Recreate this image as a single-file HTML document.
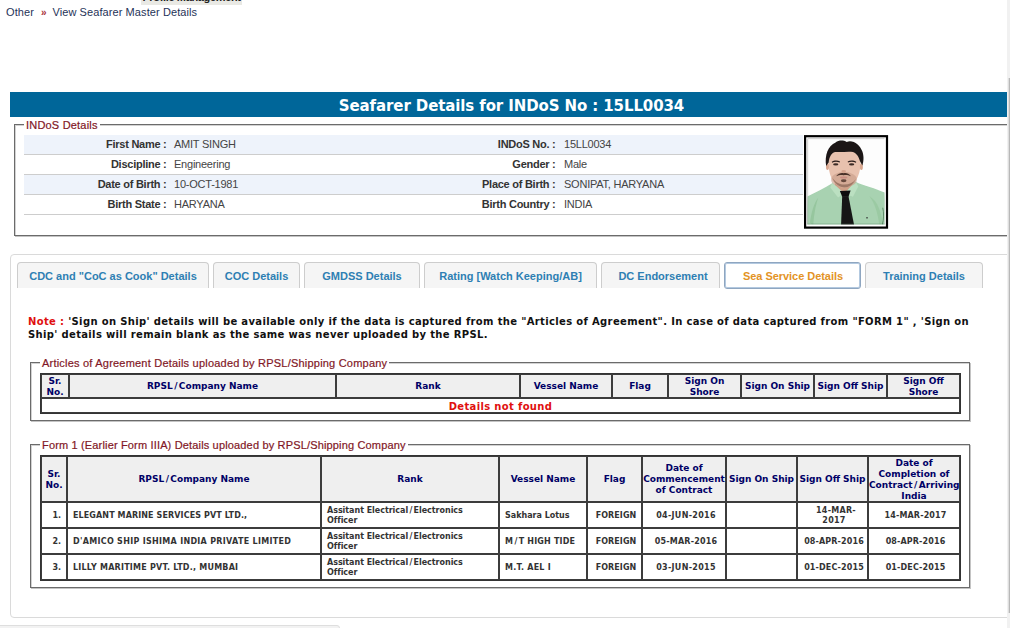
<!DOCTYPE html>
<html lang="en">
<head>
<meta charset="utf-8">
<title>View Seafarer Master Details</title>
<style>
html,body{margin:0;padding:0;}
body{width:1010px;height:628px;overflow:hidden;position:relative;background:#fff;font-family:"Liberation Sans",Arial,sans-serif;font-size:11px;color:#333;}
.abs{position:absolute;}
.v{font-family:"DejaVu Sans",Verdana,sans-serif;font-weight:bold;}
#topclip{left:141px;top:-9px;width:101px;height:13.5px;letter-spacing:-0.35px;background:#e9e9e4;color:#222;font-weight:bold;font-size:11px;line-height:13px;text-align:center;white-space:nowrap;}
#crumb{letter-spacing:0.09px;left:6px;top:5px;font-size:11px;line-height:14px;color:#1f3358;white-space:nowrap;}
#crumb b{color:#a8323a;font-weight:bold;font-size:10px;padding:0 2.5px 0 4px;}
#bar{left:10px;top:92px;width:997px;height:25px;background:#006699;color:#fff;text-align:center;font-size:15px;line-height:28px;white-space:nowrap;letter-spacing:-0.11px;overflow:hidden;box-sizing:border-box;padding-left:6px;}
fieldset{margin:0;padding:0;border:1px solid #6b6b6b;box-shadow:inset 1px 1px 0 #d2d2d2,1px 1px 0 #c4c4c4;position:absolute;box-sizing:border-box;min-width:0;}
legend{letter-spacing:0.15px;padding:1px 2px 0;background:#fff;color:#821726;-webkit-text-stroke:0.2px #821726;font-size:11px;line-height:12px;font-family:"Liberation Sans",Arial,sans-serif;white-space:nowrap;}
#fs0{left:14px;top:118px;width:1000px;height:118px;}
#fs0 legend{margin-left:9px;letter-spacing:0.2px;}
.row{position:absolute;left:24px;width:779px;height:19px;border-bottom:1px solid #cdcdcd;}
.row.alt{background:#eef3fb;}
.row span{position:absolute;top:0;line-height:19px;white-space:nowrap;font-size:11px;}
.row .l{text-align:right;font-weight:bold;color:#333;letter-spacing:-0.26px;}
.row .val{color:#444;letter-spacing:-0.23px;}
.l1{right:636.5px;}
.v1{left:150px;}
.l2{right:247.5px;}
.v2{left:540px;}
#photo{left:800px;top:130px;width:92px;height:104px;}
#tabs{left:10px;top:254px;width:1010px;height:364px;border:1px solid #dadada;border-radius:4px;box-sizing:border-box;}
.tab{position:absolute;top:262px;height:26px;box-sizing:border-box;border:1px solid #cdcdcd;border-bottom:none;border-radius:4px 4px 0 0;background:#f5f5f5;color:#2e7fb3;font-weight:bold;font-size:11px;line-height:26px;text-align:center;white-space:nowrap;}
.tab.act{background:#fff;border:1px solid #8fa6c0;box-shadow:inset 0 0 0 1px #b3c9e0;border-radius:3px;color:#e39325;height:27px;padding-left:1px;letter-spacing:-0.05px;}
#note{left:28px;top:315px;width:960px;font-size:10px;line-height:13px;color:#111;letter-spacing:0.343px;}
#note i{font-style:normal;color:#e01010;}
#fs1{left:30px;top:356px;width:940px;height:65px;}
#fs2{left:30px;top:438px;width:940px;height:150px;}
#fs1 legend{margin-left:9px;letter-spacing:0.21px;}#fs2 legend{margin-left:9px;letter-spacing:0.16px;}
table.g{position:absolute;left:40px;border-collapse:separate;border-spacing:0;border:1px solid #333;table-layout:fixed;width:921px;}
table.g td,table.g th{border:1px solid #3c3c3c;padding:0;overflow:hidden;}
table.g th{background:#efefef;color:#000066;font-family:"DejaVu Sans",Verdana,sans-serif;font-weight:bold;font-size:9px;line-height:11px;text-align:center;}
table.g .sl{padding:0 1.45px;}
table.g th .d{display:block;position:relative;top:1px;}
table.g th .d0{display:block;}
table.g td{font-family:"DejaVu Sans",Verdana,sans-serif;font-weight:bold;font-size:8px;line-height:10px;color:#333;text-align:center;padding-top:1px;}
table.g td.sr{text-align:right;padding-right:5px;}
table.g td .sl{padding:0 1.3px;}
table.g td.lft{text-align:left;padding-left:5px;}
#t1{top:373px;}
#t2{top:455px;}
#nf{color:#e01010;font-size:10px;line-height:11px;height:11px;box-sizing:content-box;padding-top:2px;letter-spacing:0.34px;}
#sb{left:1007px;top:0;width:3px;height:628px;background:#f1f1f1;}
#sbt{left:1008px;top:78px;width:2px;height:535px;background:linear-gradient(to right,#dedede 0,#dedede 1px,#b8b8b8 1px);}
#bot{left:-2px;top:625px;width:342px;height:10px;background:#f2f2f2;border:1px solid #dedede;border-radius:0 3px 0 0;box-sizing:border-box;}
</style>
</head>
<body>
<div class="abs" id="topclip">Profile Management</div>
<div class="abs" id="crumb">Other <b>»</b> View Seafarer Master Details</div>
<div class="abs v" id="bar">Seafarer Details for INDoS No : 15LL0034</div>

<fieldset id="fs0"><legend>INDoS Details</legend></fieldset>
<div class="row alt" style="top:135px"><span class="l l1">First Name :</span><span class="val v1">AMIT SINGH</span><span class="l l2">INDoS No. :</span><span class="val v2">15LL0034</span></div>
<div class="row" style="top:155px"><span class="l l1">Discipline :</span><span class="val v1">Engineering</span><span class="l l2">Gender :</span><span class="val v2">Male</span></div>
<div class="row alt" style="top:175px"><span class="l l1">Date of Birth :</span><span class="val v1">10-OCT-1981</span><span class="l l2">Place of Birth :</span><span class="val v2">SONIPAT, HARYANA</span></div>
<div class="row" style="top:195px"><span class="l l1">Birth State :</span><span class="val v1">HARYANA</span><span class="l l2">Birth Country :</span><span class="val v2">INDIA</span></div>

<svg class="abs" id="photo" viewBox="0 0 92 104">
<defs><filter id="bl" x="-5%" y="-5%" width="110%" height="110%"><feGaussianBlur stdDeviation="3.2"/></filter>
<clipPath id="pc"><rect x="44" y="50" width="468" height="521"/></clipPath></defs>
<rect x="5.1" y="6.2" width="81.9" height="91.4" fill="#fff" stroke="#000" stroke-width="2.2"/>
<g transform="scale(0.16548)" clip-path="url(#pc)">
<rect x="44" y="50" width="468" height="521" fill="#fdfdfd"/>
<g filter="url(#bl)">
<path d="M212,300 L332,300 L340,380 L205,380 Z" fill="#cfa088"/>
<path d="M40,590 L44,402 C90,378 150,352 195,322 L268,388 L336,312 C380,336 460,352 512,378 L520,590 Z" fill="#a8d2b1"/>
<path d="M60,560 C70,500 80,450 110,410 C90,470 85,520 80,575 Z" fill="#8fc096" opacity=".7"/>
<path d="M420,400 C450,440 470,500 480,575 L500,575 C495,500 470,430 420,400 Z" fill="#93c49a" opacity=".6"/>
<path d="M195,318 L268,384 L230,408 L183,348 Z" fill="#bbe0c1"/>
<path d="M336,310 L268,384 L320,404 L352,342 Z" fill="#bbe0c1"/>
<path d="M241,368 L306,366 L293,404 L255,404 Z" fill="#101010"/>
<path d="M255,400 L293,400 L328,580 L248,580 Z" fill="#141414"/>
<path d="M170,180 C168,150 190,126 220,126 C260,130 300,124 325,128 C352,134 368,160 366,200 C366,240 355,280 335,310 C315,336 290,347 268,347 C240,347 215,332 198,306 C180,275 170,230 170,180 Z" fill="#e8c1ae"/>
<ellipse cx="166" cy="222" rx="9" ry="20" fill="#d9a78f"/>
<ellipse cx="371" cy="222" rx="9" ry="20" fill="#d9a78f"/>
<ellipse cx="266" cy="300" rx="78" ry="46" fill="#c29884" opacity=".55"/>
<path d="M196,290 C212,328 240,347 268,347 C294,347 320,332 338,296 C322,318 296,330 268,330 C242,330 216,318 196,290 Z" fill="#7a5646" opacity=".6"/>
<path d="M218,280 C233,260 254,257 264,262 C274,257 294,260 308,280 C292,271 276,271 264,273 C250,271 236,271 218,280 Z" fill="#4a3129"/>
<ellipse cx="264" cy="287" rx="22" ry="6.5" fill="#c98d82"/>
<ellipse cx="264" cy="307" rx="17" ry="9" fill="#5a3d33" opacity=".9"/>
<ellipse cx="264" cy="250" rx="14" ry="9" fill="#d3a28d"/>
<ellipse cx="216" cy="208" rx="16" ry="7" fill="#3b2a26"/>
<ellipse cx="312" cy="208" rx="16" ry="7" fill="#3b2a26"/>
<path d="M192,192 C205,182 228,182 242,190 L240,196 C226,190 206,190 194,198 Z" fill="#2a1d1a"/>
<path d="M288,190 C302,182 326,182 340,192 L338,198 C324,190 304,190 290,196 Z" fill="#2a1d1a"/>
<path d="M158,218 C148,150 170,95 215,75 C235,60 262,60 282,72 C322,58 362,90 377,130 C388,162 384,192 377,214 L362,188 C356,160 340,140 320,133 C290,128 250,136 215,133 C190,136 178,160 173,196 Z" fill="#1b1716"/>
<circle cx="405" cy="531" r="5" fill="#333"/>
</g>
<path d="M46,571 L46,52 L512,52" fill="none" stroke="#8f8f8f" stroke-width="4" opacity=".8"/>
<path d="M500,470 C508,500 506,540 498,571" fill="none" stroke="#3f6b4a" stroke-width="6" opacity=".7" filter="url(#bl)"/>
<path d="M44,569 L512,569" stroke="#4d7a58" stroke-width="4" opacity=".7"/>
</g>
</svg>

<div class="abs" id="tabs"></div>
<div class="tab" style="left:17px;width:192px">CDC and "CoC as Cook" Details</div>
<div class="tab" style="left:213px;width:87px">COC Details</div>
<div class="tab" style="left:304px;width:116px">GMDSS Details</div>
<div class="tab" style="left:424px;width:173px">Rating [Watch Keeping/AB]</div>
<div class="tab" style="left:601px;width:119px;padding-left:5px">DC Endorsement</div>
<div class="tab act" style="left:724px;width:137px">Sea Service Details</div>
<div class="tab" style="left:865px;width:118px">Training Details</div>

<div class="abs v" id="note"><i>Note :</i> 'Sign on Ship' details will be available only if the data is captured from the "Articles of Agreement". In case of data captured from "FORM 1" , 'Sign on Ship' details will remain blank as the same was never uploaded by the RPSL.</div>

<fieldset id="fs1"><legend>Articles of Agreement Details uploaded by RPSL/Shipping Company</legend></fieldset>
<table class="g" id="t1">
<colgroup><col style="width:28px"><col style="width:267px"><col style="width:184px"><col style="width:92px"><col style="width:56px"><col style="width:73px"><col style="width:73px"><col style="width:73px"><col style="width:73px"></colgroup>
<tr style="height:24px"><th><span class="d">Sr.<br>No.</span></th><th><span class="d0">RPSL<span class="sl">/</span>Company Name</span></th><th><span class="d0">Rank</span></th><th><span class="d0">Vessel Name</span></th><th><span class="d0">Flag</span></th><th><span class="d">Sign On<br>Shore</span></th><th><span class="d0">Sign On Ship</span></th><th><span class="d0">Sign Off Ship</span></th><th><span class="d">Sign Off<br>Shore</span></th></tr>
<tr><td colspan="9" id="nf">Details not found</td></tr>
</table>

<fieldset id="fs2"><legend>Form 1 (Earlier Form IIIA) Details uploaded by RPSL/Shipping Company</legend></fieldset>
<table class="g" id="t2">
<colgroup><col style="width:26px"><col style="width:254px"><col style="width:178px"><col style="width:88px"><col style="width:55px"><col style="width:84px"><col style="width:71px"><col style="width:71px"><col style="width:92px"></colgroup>
<tr style="height:46px"><th><span class="d">Sr.<br>No.</span></th><th><span class="d0">RPSL<span class="sl">/</span>Company Name</span></th><th><span class="d0">Rank</span></th><th><span class="d0">Vessel Name</span></th><th><span class="d0">Flag</span></th><th><span class="d0">Date of<br>Commencement<br>of Contract</span></th><th><span class="d0">Sign On Ship</span></th><th><span class="d0">Sign Off Ship</span></th><th><span class="d">Date of<br>Completion of<br>Contract<span class="sl">/</span>Arriving<br>India</span></th></tr>
<tr style="height:26px"><td class="sr">1.</td><td class="lft" style="letter-spacing:0.108px">ELEGANT MARINE SERVICES PVT LTD.,</td><td class="lft" style="letter-spacing:-0.035px">Assitant Electrical<span class="sl">/</span>Electronics<br>Officer</td><td class="lft">Sakhara Lotus</td><td style="letter-spacing:0.08px;padding-left:3px">FOREIGN</td><td style="padding-left:4px;letter-spacing:0.316px">04-JUN-2016</td><td></td><td style="padding-left:3px;letter-spacing:0.265px"><span style="padding-left:4px">14-MAR-</span><br>2017</td><td style="padding-left:3px;letter-spacing:0.158px">14-MAR-2017</td></tr>
<tr style="height:26px"><td class="sr">2.</td><td class="lft" style="letter-spacing:0.301px">D'AMICO SHIP ISHIMA INDIA PRIVATE LIMITED</td><td class="lft" style="letter-spacing:-0.035px">Assitant Electrical<span class="sl">/</span>Electronics<br>Officer</td><td class="lft" style="letter-spacing:0.16px">M<span class="sl">/</span>T HIGH TIDE</td><td style="letter-spacing:0.08px;padding-left:3px">FOREIGN</td><td style="padding-left:4px;letter-spacing:0.186px">05-MAR-2016</td><td></td><td style="padding-left:3px;letter-spacing:0.13px">08-APR-2016</td><td style="padding-left:3px;letter-spacing:0.13px">08-APR-2016</td></tr>
<tr style="height:26px"><td class="sr">3.</td><td class="lft" style="letter-spacing:0.226px">LILLY MARITIME PVT. LTD., MUMBAI</td><td class="lft" style="letter-spacing:-0.035px">Assitant Electrical<span class="sl">/</span>Electronics<br>Officer</td><td class="lft" style="letter-spacing:0.231px">M.T. AEL I</td><td style="letter-spacing:0.08px;padding-left:3px">FOREIGN</td><td style="padding-left:4px;letter-spacing:0.316px">03-JUN-2015</td><td></td><td style="padding-left:3px;letter-spacing:0.136px">01-DEC-2015</td><td style="padding-left:3px;letter-spacing:0.136px">01-DEC-2015</td></tr>
</table>

<div class="abs" id="bot"></div>
<div class="abs" id="sb"></div>
<div class="abs" id="sbt"></div>
</body>
</html>
